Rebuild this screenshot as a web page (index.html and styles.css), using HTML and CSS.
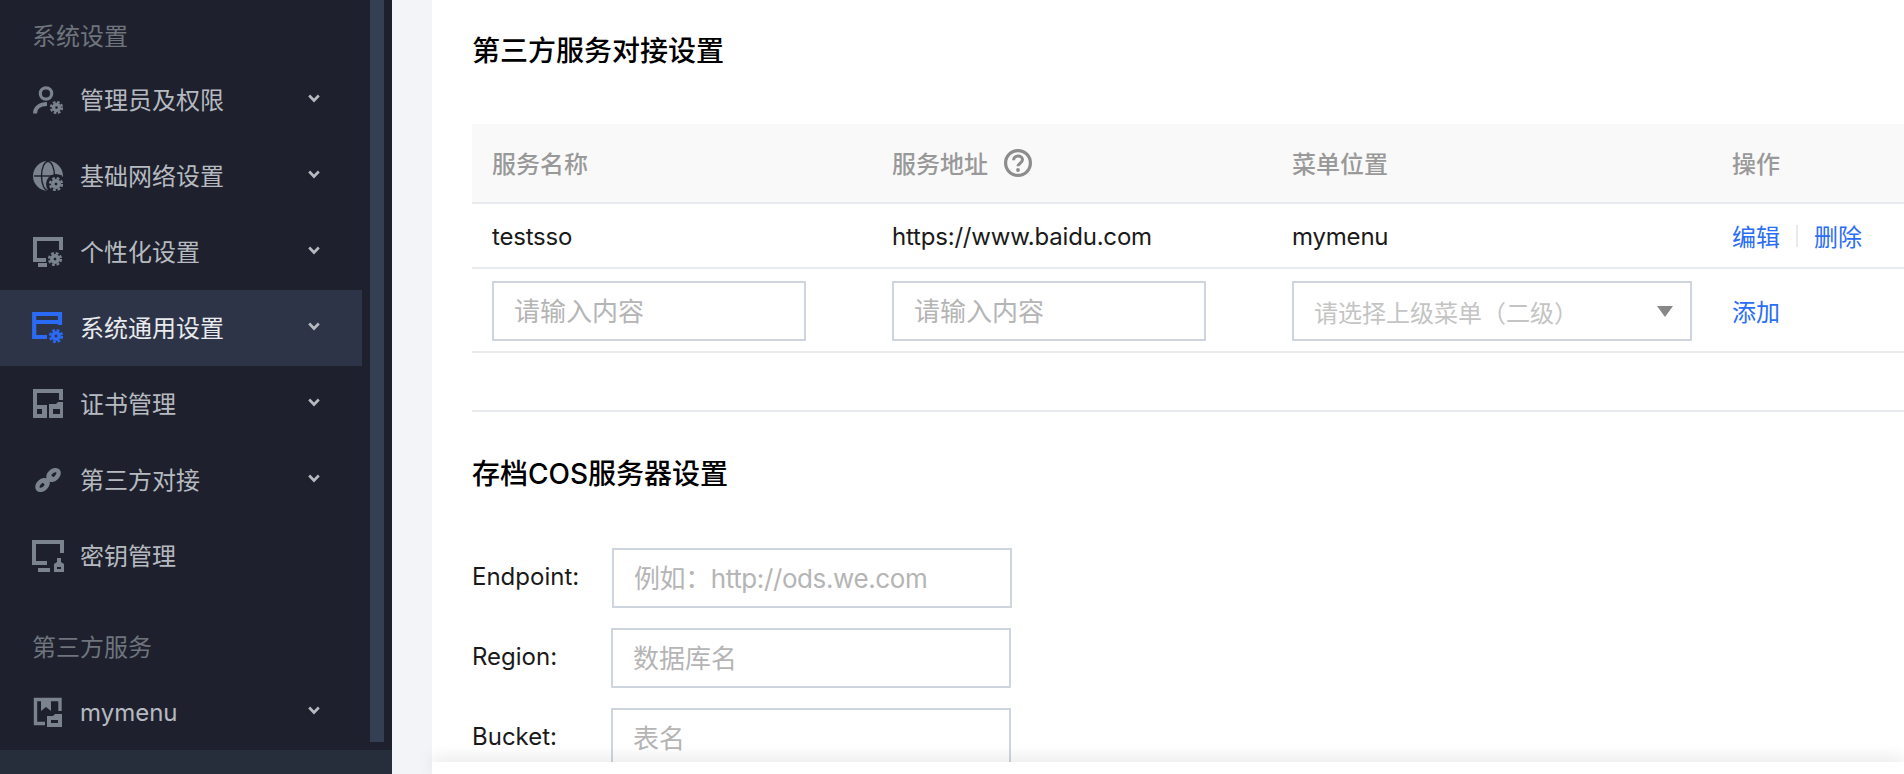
FILE: index.html
```html
<!DOCTYPE html>
<html>
<head>
    <meta charset="UTF-8">
    <title>系统通用设置</title>
    <link rel="stylesheet" href="styles.css">
</head>
<body>
    <svg class="icon-defs" width="0" height="0">
        <symbol id="gear" viewBox="-8 -8 16 16" overflow="visible">
            <circle r="3.2" fill="none" stroke="currentColor" stroke-width="3.6"></circle>
            <circle r="5.9" fill="none" stroke="currentColor" stroke-width="2.4" stroke-dasharray="2.8 1.83"></circle>
        </symbol>
        <symbol id="chevron" viewBox="0 0 12 9">
            <polyline points="1.2,1.5 6,6.5 10.8,1.5" fill="none" stroke="currentColor" stroke-width="2.6"></polyline>
        </symbol>
    </svg>

    <div class="app">
        <aside class="sidebar">
            <div class="sidebar-body">
                <nav class="nav">
                    <div class="nav-title nav-title-first">系统设置</div>

                    <a class="nav-item">
                        <svg class="nav-icon" viewBox="0 0 32 32">
                            <circle cx="14" cy="9.5" r="5.7" fill="none" stroke="currentColor" stroke-width="3.2"></circle>
                            <path d="M3 29.500c0-6 5-9.500 12-9.500" fill="none" stroke="currentColor" stroke-width="4"></path>
                            <use href="#gear" x="17" y="16" width="15" height="15"></use>
                        </svg>
                        <span class="nav-text">管理员及权限</span>
                        <svg class="nav-arrow"><use href="#chevron"></use></svg>
                    </a>
                    <a class="nav-item">
                        <svg class="nav-icon" viewBox="0 0 32 32">
                            <circle cx="16" cy="16" r="15" fill="currentColor"></circle>
                            <ellipse cx="16" cy="16" rx="6.5" ry="14.500" fill="none" stroke="#1e212d" stroke-width="1.4"></ellipse>
                            <path d="M2 16h28" stroke="#1e212d" stroke-width="1.4"></path>
                            <circle cx="24" cy="24" r="10" fill="#1e212d"></circle>
                            <use href="#gear" x="16" y="16" width="16" height="16"></use>
                        </svg>
                        <span class="nav-text">基础网络设置</span>
                        <svg class="nav-arrow"><use href="#chevron"></use></svg>
                    </a>
                    <a class="nav-item">
                        <svg class="nav-icon" viewBox="0 0 32 32">
                            <path d="M29 14V3H3V24H14" fill="none" stroke="currentColor" stroke-width="4"></path>
                            <path d="M6 29h9" stroke="currentColor" stroke-width="4"></path>
                            <use href="#gear" x="15" y="15" width="16" height="16"></use>
                        </svg>
                        <span class="nav-text">个性化设置</span>
                        <svg class="nav-arrow"><use href="#chevron"></use></svg>
                    </a>
                    <a class="nav-item nav-item-active">
                        <svg class="nav-icon" viewBox="0 0 32 32">
                            <path d="M28 13V2H2.200V25H15" fill="none" stroke="currentColor" stroke-width="4.200"></path>
                            <path d="M2 10h27" stroke="currentColor" stroke-width="4"></path>
                            <use href="#gear" x="16" y="16" width="16" height="16"></use>
                        </svg>
                        <span class="nav-text">系统通用设置</span>
                        <svg class="nav-arrow"><use href="#chevron"></use></svg>
                    </a>
                    <a class="nav-item">
                        <svg class="nav-icon" viewBox="0 0 32 32">
                            <path d="M29 12V3H3V17" fill="none" stroke="currentColor" stroke-width="4"></path>
                            <path fill-rule="evenodd" fill="currentColor" d="M1 17h14v13H1zM5 21v5h5v-5z"></path>
                            <path fill-rule="evenodd" fill="currentColor" d="M17 16h7l2-2h5v16H17zM21 21v5h7v-5z"></path>
                        </svg>
                        <span class="nav-text">证书管理</span>
                        <svg class="nav-arrow"><use href="#chevron"></use></svg>
                    </a>
                    <a class="nav-item">
                        <svg class="nav-icon" viewBox="0 0 32 32">
                            <ellipse cx="10.500" cy="21" rx="6" ry="3.800" transform="rotate(-42 10.500 21)" fill="none" stroke="currentColor" stroke-width="4.400"></ellipse>
                            <ellipse cx="21.500" cy="11" rx="6" ry="3.800" transform="rotate(-42 21.500 11)" fill="none" stroke="currentColor" stroke-width="4.400"></ellipse>
                            <path d="M12 20l8-8" stroke="currentColor" stroke-width="4"></path>
                        </svg>
                        <span class="nav-text">第三方对接</span>
                        <svg class="nav-arrow"><use href="#chevron"></use></svg>
                    </a>
                    <a class="nav-item">
                        <svg class="nav-icon" viewBox="0 0 32 32">
                            <path d="M30 13V2H2V23H15" fill="none" stroke="currentColor" stroke-width="4"></path>
                            <path d="M6 30h12" stroke="currentColor" stroke-width="4"></path>
                            <path fill-rule="evenodd" fill="currentColor" d="M22 24l3-2v-4h4v4l3 2v8H22zM25 27v2h4v-2z"></path>
                        </svg>
                        <span class="nav-text">密钥管理</span>
                    </a>

                    <div class="nav-title nav-title-second">第三方服务</div>

                    <a class="nav-item">
                        <svg class="nav-icon" viewBox="0 0 32 32">
                            <path d="M28 15V3.500H3.500V27.500H13" fill="none" stroke="currentColor" stroke-width="3.400"></path>
                            <path fill="currentColor" d="M9 4h10v11l-5-4-5 4z"></path>
                            <path fill-rule="evenodd" fill="currentColor" d="M15 20h6l2-2h7v13H15zM19 24v3h7v-3z"></path>
                        </svg>
                        <span class="nav-text-latin">mymenu</span>
                        <svg class="nav-arrow"><use href="#chevron"></use></svg>
                    </a>
                </nav>
                <div class="scroll-thumb"></div>
            </div>
            <div class="sidebar-footer"></div>
        </aside>

        <main class="main">
            <div class="panel">
                <h2 class="section-title">第三方服务对接设置</h2>

                <table class="service-table">
                    <colgroup>
                        <col class="col-name">
                        <col class="col-url">
                        <col class="col-menu">
                        <col>
                    </colgroup>
                    <thead>
                        <tr>
                            <th>服务名称</th>
                            <th>
                                <span class="th-help">
                                    服务地址
                                    <svg class="help-icon" viewBox="0 0 28 28">
                                        <circle cx="14" cy="14" r="12.400" fill="none" stroke="currentColor" stroke-width="3.200"></circle>
                                        <path d="M9.600 11.200c0-2.500 2-4.200 4.500-4.200s4.400 1.600 4.400 3.800c0 3.400-4.500 3.300-4.500 6.400" fill="none" stroke="currentColor" stroke-width="3"></path>
                                        <circle cx="14" cy="21" r="1.900" fill="currentColor"></circle>
                                    </svg>
                                </span>
                            </th>
                            <th>菜单位置</th>
                            <th>操作</th>
                        </tr>
                    </thead>
                    <tbody>
                        <tr class="row-data">
                            <td><div class="cell-text">testsso</div></td>
                            <td><div class="cell-text">https://www.baidu.com</div></td>
                            <td><div class="cell-text">mymenu</div></td>
                            <td>
                                <div class="actions">
                                    <a class="link">编辑</a>
                                    <span class="action-sep"></span>
                                    <a class="link">删除</a>
                                </div>
                            </td>
                        </tr>
                        <tr class="row-edit">
                            <td><input class="text-input input-cell" placeholder="请输入内容"></td>
                            <td><input class="text-input input-cell" placeholder="请输入内容"></td>
                            <td>
                                <div class="select-box">
                                    <span>请选择上级菜单（二级）</span>
                                    <i class="select-arrow"></i>
                                </div>
                            </td>
                            <td><a class="link">添加</a></td>
                        </tr>
                    </tbody>
                </table>

                <div class="divider"></div>

                <h2 class="section-title">存档COS服务器设置</h2>

                <div class="cos-form">
                    <div class="form-row">
                        <label class="form-label">Endpoint:</label>
                        <input class="text-input input-form input-endpoint" placeholder="例如：http://ods.we.com">
                    </div>
                    <div class="form-row">
                        <label class="form-label">Region:</label>
                        <input class="text-input input-form" placeholder="数据库名">
                    </div>
                    <div class="form-row">
                        <label class="form-label">Bucket:</label>
                        <input class="text-input input-form" placeholder="表名">
                    </div>
                </div>
            </div>
            <div class="main-footer"></div>
        </main>
    </div>
</body>
</html>
```

FILE: styles.css
```css
/* 页面整体 */
html, body {
    height: 100%;
}
body {
    margin: 0;
    font-family: Inter, "Noto Sans CJK SC", sans-serif;
    font-size: 24px;
    color: #1a1a1a;
    overflow: hidden;
}
.icon-defs {
    position: absolute;
}
.app {
    display: flex;
    height: 100vh;
}

/* 左侧导航 */
.sidebar {
    width: 392px;
    flex-shrink: 0;
    display: flex;
    flex-direction: column;
    background: #1e212d;
}
.sidebar-body {
    flex: 1;
    min-height: 0;
    display: flex;
    overflow: hidden;
}
.nav {
    width: 362px;
    flex-shrink: 0;
}
.scroll-thumb {
    width: 14px;
    height: 742px;
    margin-left: 8px;
    background: #343f54;
}
.sidebar-footer {
    height: 24px;
    background: #272e3b;
}
.nav-title {
    height: 52px;
    line-height: 52px;
    padding-left: 32px;
    color: #6f747d;
}
.nav-title-first {
    margin-top: 11px;
}
.nav-title-second {
    margin-top: 28px;
}
.nav-title-first + .nav-item {
    margin-top: -1px;
}
.nav-item {
    display: flex;
    align-items: center;
    height: 76px;
    padding-left: 32px;
    color: #b6bac0;
}
.nav-icon {
    width: 32px;
    height: 32px;
    margin-right: 16px;
    flex-shrink: 0;
    color: #7a838e;
}
.nav-text {
    margin-bottom: 4px;
}
.nav-arrow {
    width: 12px;
    height: 9px;
    margin-left: auto;
    margin-right: 42px;
    margin-bottom: 4px;
    color: #b6bac0;
}
.nav-item-active {
    background: #2e3447;
    color: #e8eaee;
}
.nav-item-active .nav-icon {
    color: #2a6af5;
}

/* 右侧内容 */
.main {
    flex: 1;
    min-width: 0;
    position: relative;
    padding-left: 40px;
    background: #f3f4f8;
}
.panel {
    height: 100%;
    padding-left: 40px;
    background: #fff;
    overflow: hidden;
}
.main-footer {
    position: absolute;
    left: 40px;
    right: 0;
    bottom: 0;
    height: 12px;
    background: #fff;
    box-shadow: 0 -4px 16px rgba(0,0,0,0.1);
}
.section-title {
    margin: 0;
    height: 100px;
    line-height: 102px;
    font-size: 28px;
    font-weight: 500;
    color: #000;
}

/* 服务表格 */
.service-table {
    width: 100%;
    margin-top: 24px;
    border-collapse: collapse;
    table-layout: fixed;
}
.col-name, .col-url {
    width: 400px;
}
.col-menu {
    width: 440px;
}
.service-table th,
.service-table td {
    padding: 0 20px;
    text-align: left;
    border-bottom: 2px solid #e7eaef;
}
.service-table th {
    height: 79px;
    padding-bottom: 2px;
    box-sizing: border-box;
    background: #f9f9f9;
    font-weight: 500;
    color: #999;
}
.row-data td {
    height: 63px;
}
.row-edit td {
    height: 82px;
}
.cell-text {
    padding-top: 2px;
    letter-spacing: -0.2px;
}
.th-help {
    display: flex;
    align-items: center;
    gap: 16px;
}
.help-icon {
    width: 28px;
    height: 28px;
    margin-top: 2px;
    color: #8c8c8c;
}
.actions {
    display: flex;
    align-items: center;
}
.action-sep {
    width: 2px;
    height: 22px;
    margin: 0 16px 0 16px;
    background: #e7eaef;
}
.link {
    color: #2a6ef5;
    cursor: pointer;
}

/* 输入框 */
.text-input {
    box-sizing: border-box;
    height: 60px;
    padding: 0 20px;
    border: 2px solid #cfd5de;
    border-radius: 0;
    outline: none;
    font: inherit;
    font-size: 26px;
    color: #1a1a1a;
}
.text-input::placeholder {
    color: #b5b5b5;
}
.input-cell {
    display: block;
    width: 314px;
    margin-top: 2px;
}
.select-box {
    box-sizing: border-box;
    display: flex;
    align-items: center;
    justify-content: space-between;
    width: 400px;
    height: 60px;
    margin-top: 2px;
    padding: 0 17px 0 20px;
    border: 2px solid #cfd5de;
    color: #c4c4c4;
}
.select-arrow {
    width: 0;
    height: 0;
    border-left: 8px solid transparent;
    border-right: 8px solid transparent;
    border-top: 11px solid #888;
}

/* 分割线 */
.divider {
    height: 2px;
    margin: 57px 0 11px;
    background: #e7eaef;
}

/* COS表单 */
.cos-form {
    display: flex;
    flex-direction: column;
    gap: 20px;
    margin-top: 25px;
}
.form-row {
    display: flex;
    align-items: center;
}
.form-label {
    width: 139px;
    flex-shrink: 0;
    padding-bottom: 4px;
}
.input-form {
    width: 400px;
}
.input-endpoint {
    margin-left: 1px;
    letter-spacing: -0.4px;
}
```
